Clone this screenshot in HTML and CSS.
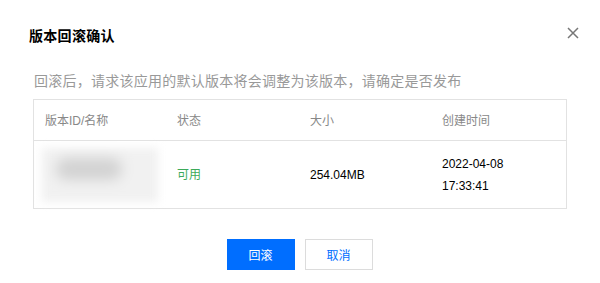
FILE: index.html
```html
<!DOCTYPE html>
<html lang="zh">
<head>
<meta charset="utf-8">
<link rel="stylesheet" href="styles.css">
</head>
<body>
<div class="dialog">
  <div class="head">
    <h3 class="title">版本回滚确认</h3>
    <button class="close" aria-label="关闭">
      <svg width="12" height="12" viewBox="0 0 12 12"><path d="M1 1L11 11M11 1L1 11" stroke="#777" stroke-width="1.5" fill="none"/></svg>
    </button>
  </div>
  <p class="desc">回滚后，请求该应用的默认版本将会调整为该版本，请确定是否发布</p>
  <div class="table">
    <div class="row header">
      <div class="cell">版本ID/名称</div>
      <div class="cell">状态</div>
      <div class="cell">大小</div>
      <div class="cell">创建时间</div>
    </div>
    <div class="row body">
      <div class="cell"><div class="blur"><div class="blur-core"></div></div></div>
      <div class="cell ok">可用</div>
      <div class="cell">254.04MB</div>
      <div class="cell">2022-04-08<br>17:33:41</div>
    </div>
  </div>
  <div class="actions">
    <button class="btn primary">回滚</button>
    <button class="btn">取消</button>
  </div>
</div>
</body>
</html>
```
FILE: styles.css
```css
* { box-sizing: border-box; }
html, body { margin: 0; padding: 0; background: #fff; }
body {
  font-family: "Liberation Sans", "Noto Sans CJK SC", sans-serif;
  color: #000;
  width: 600px;
  height: 283px;
  overflow: hidden;
}
.dialog { padding: 24px 33px 0 33px; }
.head {
  display: flex;
  align-items: center;
  justify-content: space-between;
  height: 22px;
  margin-left: -4px;
}
.title {
  margin: 0;
  font-size: 14px;
  font-weight: 700;
  color: #000;
  letter-spacing: 0.3px;
}
.close {
  border: 0;
  background: none;
  padding: 0;
  margin-right: -13px;
  margin-top: -4px;
  width: 14px;
  height: 14px;
  display: flex;
  align-items: center;
  justify-content: center;
}
.desc {
  margin: 25px 0 0 1px;
  font-size: 14px;
  color: #999;
  letter-spacing: 0.25px;
  line-height: 20px;
}
.table {
  margin-top: 8px;
  width: 534px;
  border: 1px solid #e2e2e2;
}
.row {
  display: grid;
  grid-template-columns: 132px 133px 132px 1fr;
}
.header { height: 41px; border-bottom: 1px solid #e2e2e2; color: #888; }
.body { height: 67px; }
.cell {
  font-size: 12px;
  padding-left: 11px;
  display: flex;
  align-items: center;
  line-height: 22px;
}
.header .cell { padding-top: 1px; }
.body .cell:first-child { padding-left: 8px; }
.ok { color: #3caa5a; }
.blur {
  width: 116px;
  height: 54px;
  background: #f1f1f1;
  filter: blur(4px);
  display: flex;
  align-items: flex-start;
  padding: 10px 0 0 14px;
}
.blur-core {
  width: 66px;
  height: 22px;
  background: #d2d2d2;
  border-radius: 11px;
  filter: blur(5px);
}
.actions {
  display: flex;
  justify-content: center;
  gap: 10px;
  margin-top: 30px;
  padding-right: 1px;
}
.btn {
  width: 68px;
  height: 31px;
  font-size: 12px;
  font-family: inherit;
  border: 1px solid #dcdcdc;
  background: #fff;
  color: #006eff;
  padding: 0;
}
.primary {
  background: #006eff;
  border-color: #006eff;
  color: #fff;
}
```
